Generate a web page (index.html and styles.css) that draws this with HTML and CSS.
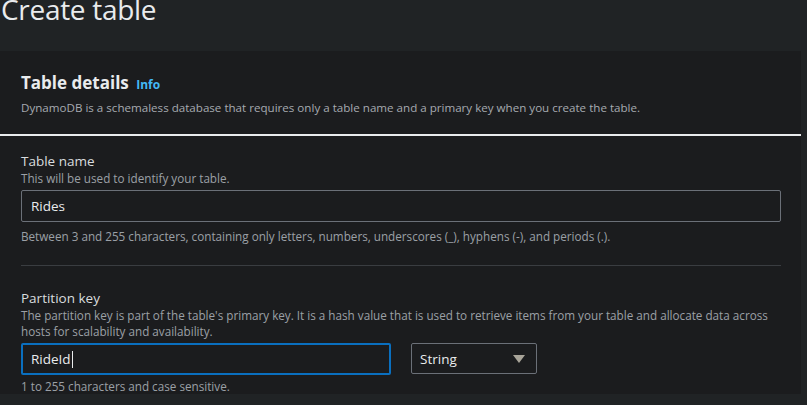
FILE: index.html
```html
<!DOCTYPE html>
<html>
<head>
<meta charset="utf-8">
<link rel="stylesheet" href="styles.css">
</head>
<body>
<h1 class="page-title">Create table</h1>
<section class="card">
  <header class="card-header">
    <h2 class="card-title">Table details <a class="info">Info</a></h2>
    <p class="card-desc">DynamoDB is a schemaless database that requires only a table name and a primary key when you create the table.</p>
  </header>
  <div class="card-body">
    <div class="field">
      <div class="label">Table name</div>
      <div class="hint">This will be used to identify your table.</div>
      <div class="input wide">Rides</div>
      <div class="help">Between 3 and 255 characters, containing only letters, numbers, underscores (_), hyphens (-), and periods (.).</div>
    </div>
    <div class="divider"></div>
    <div class="field">
      <div class="label">Partition key</div>
      <div class="hint">The partition key is part of the table's primary key. It is a hash value that is used to retrieve items from your table and allocate data across hosts for scalability and availability.</div>
      <div class="row">
        <div class="input focused">RideId<span class="caret"></span></div>
        <div class="select">String<svg class="arrow" width="12" height="10" viewBox="0 0 12 10"><path d="M0 1h12L6 9z" fill="#a8a499"/></svg></div>
      </div>
      <div class="help tight">1 to 255 characters and case sensitive.</div>
    </div>
  </div>
</section>
</body>
</html>
```
FILE: styles.css
```css
html, body {
  margin: 0;
  padding: 0;
  background: #202325;
  font-family: "Open Sans", "Noto Sans", sans-serif;
  overflow: hidden;
}
.page-title {
  margin: 0;
  height: 51px;
  font-weight: 400;
  font-size: 28px;
  line-height: 28px;
  margin-top: -5px;
  padding-left: 1px;
  color: #e9ebed;
  box-sizing: border-box;
  letter-spacing: -0.3px;
}
.card {
  margin-top: 5px;
  width: 801px;
  background: #1b1c1e;
}
.card-header {
  padding: 20px 21px 18px;
  border-bottom: 2px solid #e9ebed;
}
.card-title {
  margin: 0;
  font-size: 17px;
  line-height: 24px;
  font-weight: 700;
  color: #e9ebed;
}
.info {
  font-size: 12px;
  font-weight: 700;
  color: #44b9f6;
  margin-left: 3px;
}
.card-desc {
  margin: 3px 0 0;
  font-size: 11.6px;
  line-height: 16px;
  color: #a6aab0;
}
.card-body {
  padding: 16px 21px 0;
  width: 760px;
}
.label {
  font-size: 13.5px;
  line-height: 18px;
  color: #d9dcdf;
}
.hint {
  font-size: 11.7px;
  line-height: 16px;
  color: #9ba0a6;
}
.help {
  margin-top: 6px;
  font-size: 11.7px;
  line-height: 16px;
  color: #9ba0a6;
}
.help.tight { margin-top: 3px; }
.input {
  margin-top: 4px;
  height: 32px;
  box-sizing: border-box;
  border: 1px solid #6b7078;
  border-radius: 2px;
  padding: 0 9px;
  display: flex;
  align-items: center;
  font-size: 13.5px;
  color: #e9ebed;
}
.input.wide { width: 760px; }
.divider {
  height: 1px;
  background: #3a3d41;
  margin: 21px 0 23px;
}
.row {
  display: flex;
  gap: 20px;
  margin-top: 4px;
}
.row .input {
  margin-top: 0;
}
.input.focused {
  width: 370px;
  border: 2px solid #0a6fbf;
  padding: 0 8px;
}
.caret {
  display: inline-block;
  width: 1px;
  height: 17px;
  background: #e9ebed;
  margin-left: 1px;
}
.select {
  width: 126px;
  height: 31px;
  box-sizing: border-box;
  border: 1px solid #6b7078;
  border-radius: 2px;
  padding: 0 9px 0 8px;
  display: flex;
  align-items: center;
  justify-content: space-between;
  font-size: 13.5px;
  color: #e9ebed;
}
.arrow { margin-right: 2px; }
```
